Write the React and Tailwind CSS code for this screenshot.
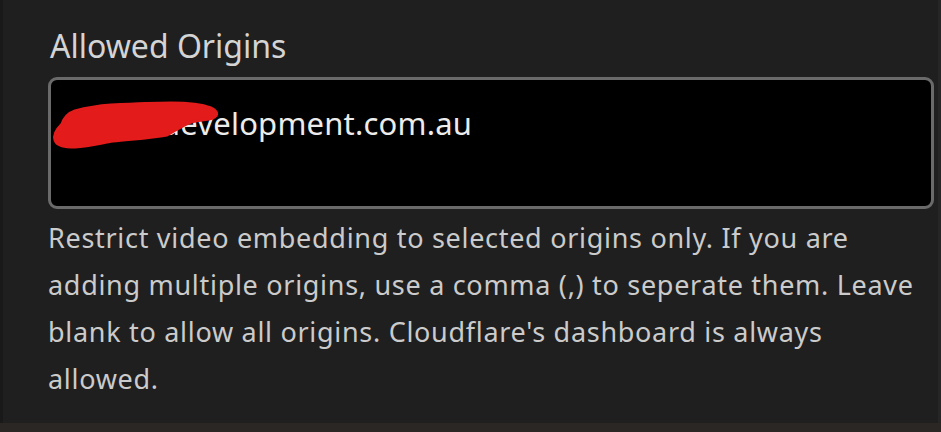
export default function App() {
  return (
    <div className="w-[941px] h-[432px] bg-[#2a2724] flex flex-col" style={{ fontFamily: '"Noto Sans", "Open Sans", sans-serif' }}>
      <div className="flex h-[423px]">
        <div className="w-[3px] bg-[#191919]" />
        <div className="flex-1 bg-[#1f1f1f] pl-[45px] pr-[4px] pt-[26px]">
          <div className="pl-[2px] text-[32px] leading-[40px] text-[#d4d4d4]">Allowed Origins</div>
          <div className="relative mt-[11px] h-[132px] rounded-[9px] border-[3px] border-[#6a6a6a] bg-black pl-[110px] pt-[23px]">
            <div className="text-[31px] leading-[40px] tracking-[0.2px] text-[#ececec]">development.com.au</div>
            <svg className="absolute left-0 top-0" width="200" height="80" viewBox="0 0 200 80">
              <path
                d="M11 44 C14 36 18 33 24 31 C35 28 45 26 60 25 C80 24 100 23 120 23 C140 23 152 25 160 28 C166 31 168 35 162 38 C155 40 147 40 140 42 C132 45 125 50 116 55 C100 58 80 59 62 61 C50 63 38 66 24 67 C14 67 6 66 4 60 C2 54 7 48 11 44 Z"
                fill="#e31b1b"
                stroke="#e31b1b"
                strokeWidth="3"
                strokeLinejoin="round"
              />
            </svg>
          </div>
          <div className="mt-[5px] text-[27px] leading-[47px] tracking-[0.7px] text-[#cbcbcb] w-[875px]">
            Restrict video embedding to selected origins only. If you are adding multiple origins, use a comma (,) to seperate them. Leave blank to allow all origins. Cloudflare's dashboard is always allowed.
          </div>
        </div>
        <div className="w-[3px] bg-[#262626]" />
      </div>
    </div>
  );
}
